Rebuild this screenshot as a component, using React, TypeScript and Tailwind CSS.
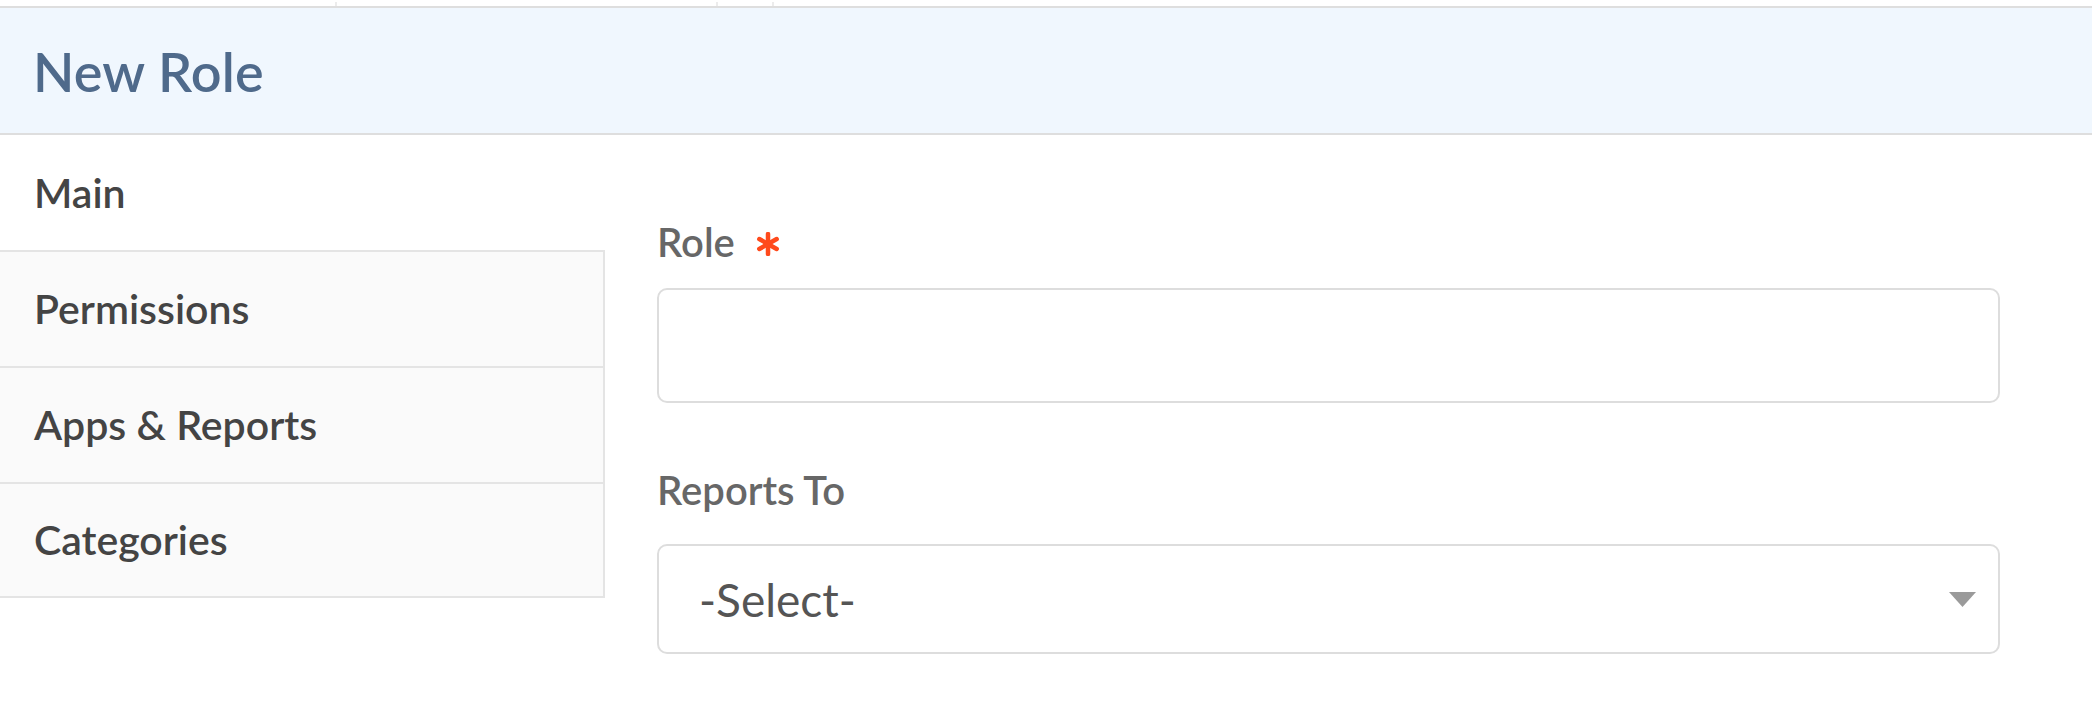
import React from "react";

const tabs = ["Main", "Permissions", "Apps & Reports", "Categories"];

function Caret() {
  return (
    <svg width="27" height="15" viewBox="0 0 27 15" className="shrink-0">
      <path d="M0 0 H27 L13.5 15 Z" fill="#9a9a9a" />
    </svg>
  );
}

function Asterisk() {
  return (
    <svg width="24" height="24" viewBox="0 0 24 24" className="ml-[21px] mt-[4px]">
      <g stroke="#ff4a1c" strokeWidth="4.5" strokeLinecap="round">
        <line x1="12" y1="2" x2="12" y2="22" />
        <line x1="3.3" y1="7" x2="20.7" y2="17" />
        <line x1="3.3" y1="17" x2="20.7" y2="7" />
      </g>
    </svg>
  );
}

export default function App() {
  return (
    <div className="w-[2100px] h-[710px] bg-white font-['Lato','Noto_Sans',sans-serif] overflow-hidden">
      {/* little marks above the header */}
      <div className="h-[6px] flex">
        <div className="w-[335px]" />
        <div className="w-[2px] h-[4px] mt-[2px] bg-[#ececec]" />
        <div className="w-[379px]" />
        <div className="w-[2px] h-[4px] mt-[2px] bg-[#ececec]" />
        <div className="w-[54px]" />
        <div className="w-[2px] h-[4px] mt-[2px] bg-[#ececec]" />
      </div>

      <header className="h-[129px] w-[2092px] bg-[#f0f7fe] border-t-2 border-b-2 border-[#dedede] flex items-center pl-[33px] pt-[2px]">
        <h1 className="text-[54px] leading-none font-semibold text-[#4f6a8b] tracking-[0.2px]">New Role</h1>
      </header>

      <div className="flex">
        <nav className="w-[605px] shrink-0 flex flex-col">
          {tabs.map((t, i) => (
            <div
              key={t}
              className={
                i === 0
                  ? "h-[115px] flex items-center pl-[34px] bg-white"
                  : "h-[116px] flex items-center pl-[34px] bg-[#fafafa] border-t-2 border-r-2 border-[#e4e4e4] " +
                    (i === tabs.length - 1 ? "border-b-2" : "")
              }
            >
              <span className="text-[41px] font-semibold text-[#444444]">{t}</span>
            </div>
          ))}
        </nav>

        <main className="pl-[52px] w-[1395px] flex flex-col">
          <label className="mt-[84px] mb-[23px] flex items-center h-[46px] text-[40px] font-semibold text-[#676767]">
            Role
            <Asterisk />
          </label>
          <input className="h-[115px] w-full border-2 border-[#dddddd] rounded-[10px] bg-white outline-none px-[40px] text-[44px]" />

          <label className="mt-[64px] mb-[31px] h-[46px] flex items-center text-[40px] font-semibold text-[#676767]">
            Reports To
          </label>
          <div className="h-[110px] w-full border-2 border-[#dddddd] rounded-[10px] bg-white flex items-center justify-between pl-[40px] pr-[22px]">
            <span className="text-[46px] text-[#555555]">-Select-</span>
            <Caret />
          </div>
        </main>
      </div>
    </div>
  );
}
